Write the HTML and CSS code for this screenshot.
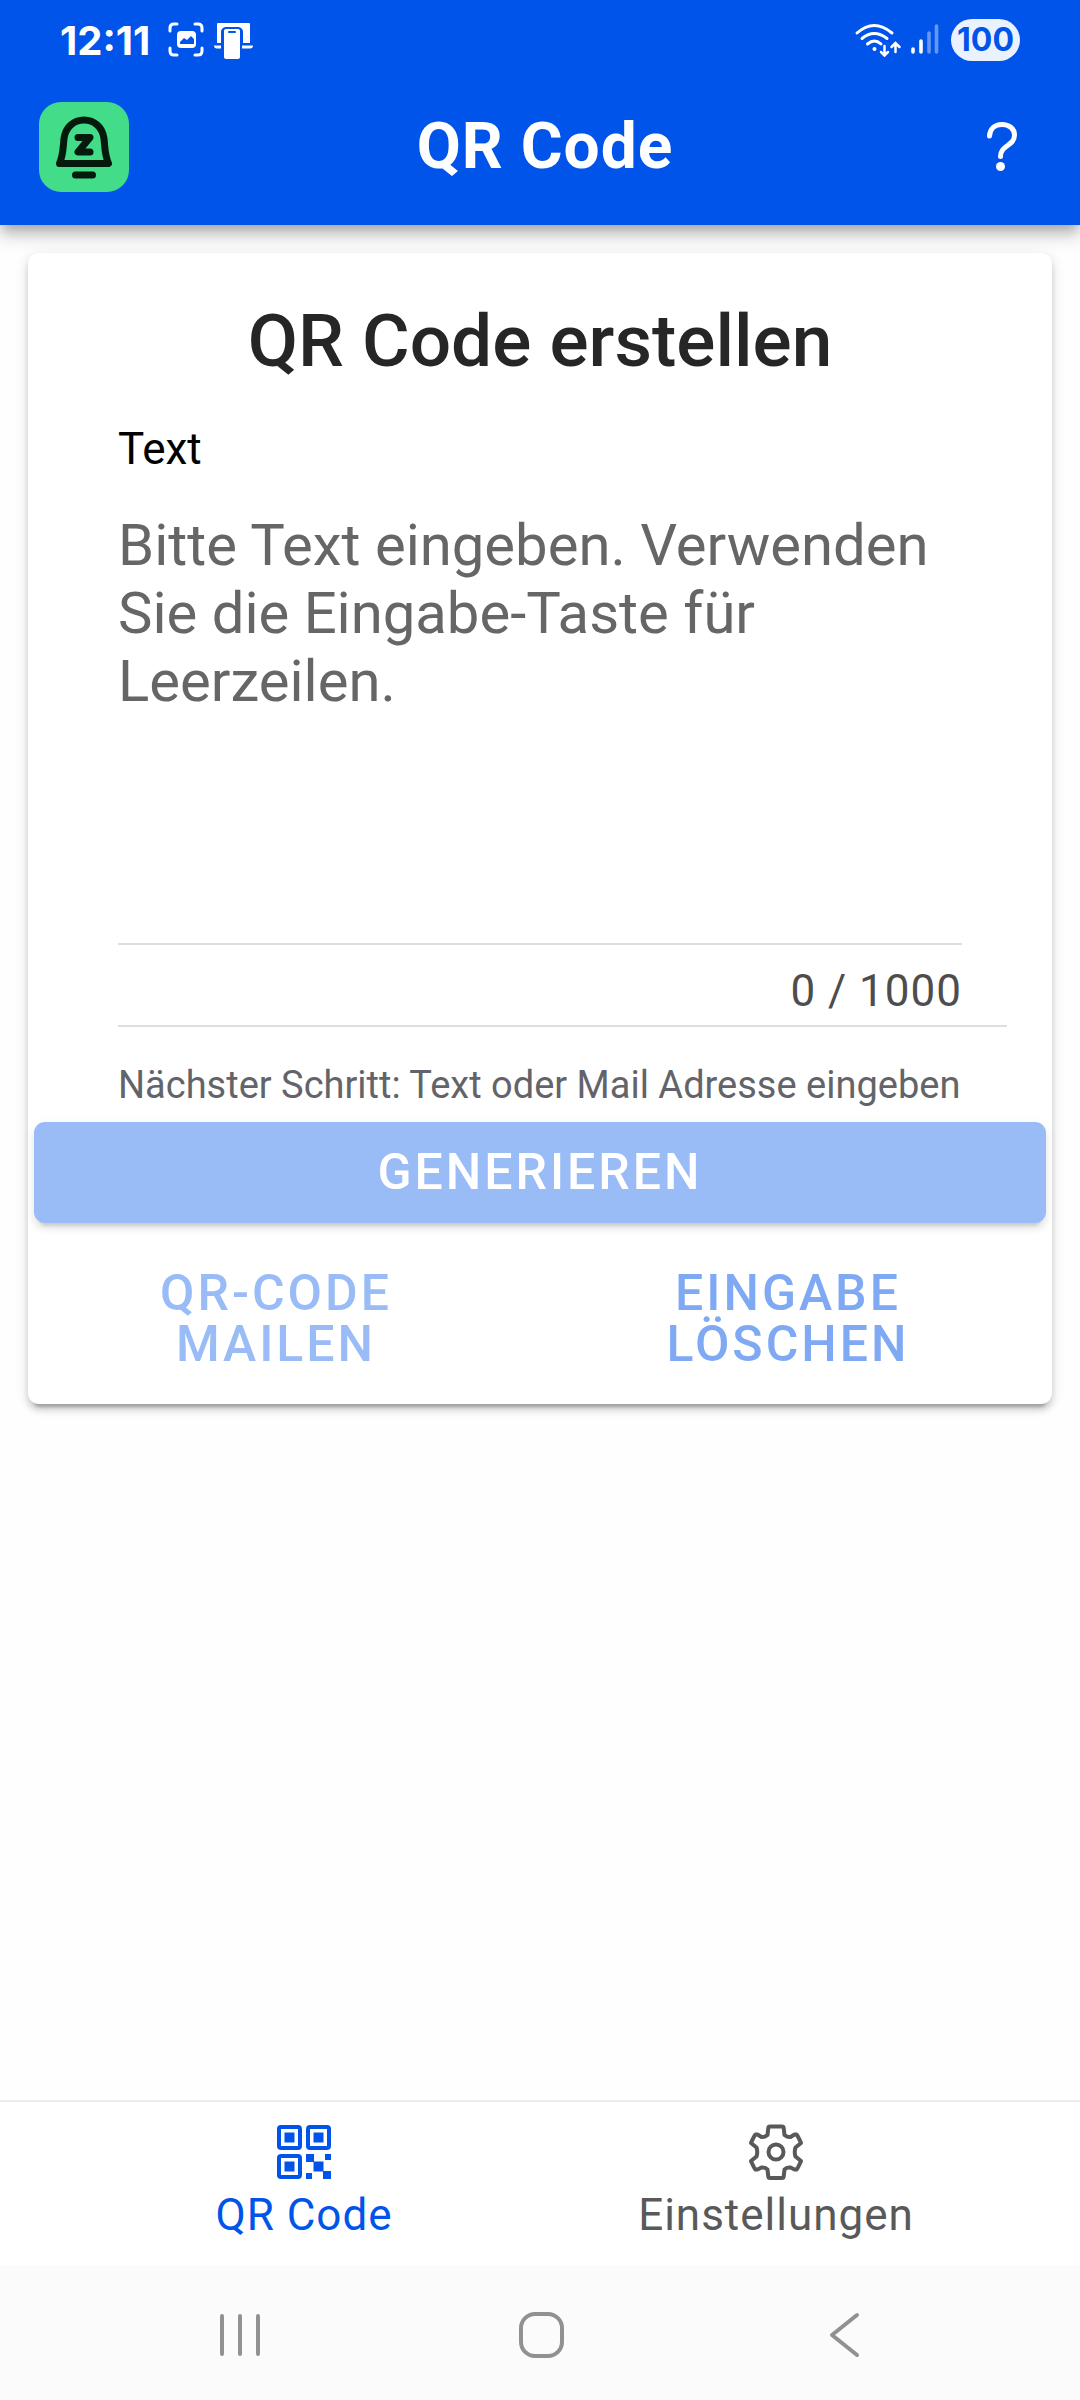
FILE: index.html
```html
<!DOCTYPE html>
<html lang="de">
<head>
<meta charset="utf-8">
<meta name="viewport" content="width=device-width, initial-scale=1">
<title>QR Code</title>
<link rel="stylesheet" href="styles.css">
</head>
<body>
<div class="app">
  <header class="header">
    <div class="status">
      <div class="status-group">
        <span class="clock">12:11</span>
        <svg class="status-icon" width="36" height="36" viewBox="0 0 36 36" aria-hidden="true">
          <path d="M2 9V6q0-4 4-4h3M27 2h3q4 0 4 4v3M34 26v3q0 4-4 4h-3M9 33H6q-4 0-4-4v-3" fill="none" stroke="#fff" stroke-width="3" stroke-linecap="round"/>
          <rect x="9" y="9" width="19" height="17" rx="4" fill="#fff"/>
          <path d="M12 22v-2l4-4 3 2 4-4 3 3v5z" fill="#0054e9"/>
        </svg>
        <svg width="40" height="38" viewBox="0 0 40 38" aria-hidden="true">
          <path d="M3 22V3q0-1 1-1h31q1 0 1 1v19h-7V11q0-4-4-4H11q-4 0-4 4v11z" fill="#fff"/>
          <path d="M0 24.500h7v3H3q-3 0-3-3zM39 24.500H28v3h8q3 0 3-3z" fill="#fff"/>
          <rect x="8" y="6" width="20" height="32" rx="4" fill="#0054e9"/>
          <rect x="10" y="8" width="16" height="30" rx="2" fill="#fff"/>
          <path d="M15 11h6" stroke="#0054e9" stroke-width="2" stroke-linecap="round"/>
        </svg>
      </div>
      <div class="status-group">
        <svg width="46" height="36" viewBox="0 0 46 36" fill="none" stroke="#fff" stroke-width="3" stroke-linecap="round" aria-hidden="true">
          <path d="M2 11q17-15 35 0M7 16.500q12-10 25 0M12.500 22q7-6 13.500 0"/>
          <circle cx="19.500" cy="27" r="2" fill="#fff" stroke="none"/>
          <path d="M29.500 24v9M26 30l3.500 3.500 3.500-3.500M40.500 30v-8.500M36.500 25l4-4 4 4" stroke-width="2.500"/>
        </svg>
        <svg width="28" height="32" viewBox="0 0 28 32" fill="none" stroke="#fff" stroke-width="3.600" stroke-linecap="round" aria-hidden="true">
          <path d="M2 28v-3M10 28V17"/><path d="M18 28V9M25.500 28V2" opacity=".4"/>
        </svg>
        <span class="battery">100</span>
      </div>
    </div>
    <div class="toolbar">
      <button class="logo" type="button" aria-label="Erinnerungen">
        <svg width="90" height="90" viewBox="0 0 90 90" fill="none" stroke="#041a0c" stroke-width="7" stroke-linecap="round" stroke-linejoin="round" aria-hidden="true">
          <path d="M20.500 61.500c4-9 3.500-16 4.500-25 1.500-11 9.500-18.500 20-18.500s18.500 7.500 20 18.500c1 9 .5 16 4.500 25z"/>
          <path d="M39 35.500h12L39 50h12M36.500 73h17"/>
        </svg>
      </button>
      <h1 class="title">QR Code</h1>
      <button class="help" type="button" aria-label="Hilfe">
        <svg width="32" height="50" viewBox="0 0 32 50" aria-hidden="true">
          <path d="M3.500 14c.5-7 5-11.500 12.500-11.500S28.500 7 28.500 13c0 11-14 10-14 21.500" fill="none" stroke="#fff" stroke-width="5" stroke-linecap="round"/>
          <circle cx="14.500" cy="44.500" r="4.500" fill="#fff"/>
        </svg>
      </button>
    </div>
  </header>

  <main class="content">
    <form class="card">
      <h2 class="card-title">QR Code erstellen</h2>
      <div class="field">
        <label class="field-label" for="qr-text">Text</label>
        <textarea class="field-input" id="qr-text" maxlength="1000" placeholder="Bitte Text eingeben. Verwenden Sie die Eingabe-Taste für Leerzeilen."></textarea>
        <div class="counter">0 / 1000</div>
      </div>
      <p class="hint">Nächster Schritt: Text oder Mail Adresse eingeben</p>
      <button class="btn btn-solid" type="button" disabled>Generieren</button>
      <div class="actions">
        <button class="btn btn-clear" type="button" disabled>QR-Code<br>mailen</button>
        <button class="btn btn-clear btn-soft" type="button">Eingabe<br>löschen</button>
      </div>
    </form>
  </main>

  <nav class="tabs">
    <a class="tab tab-active" href="#qr" aria-current="page">
      <svg width="54" height="54" viewBox="0 0 54 54" aria-hidden="true">
        <g fill="none" stroke="currentColor" stroke-width="4"><rect x="2" y="2" width="21" height="21" rx="2"/><rect x="31" y="2" width="21" height="21" rx="2"/><rect x="2" y="31" width="21" height="21" rx="2"/></g>
        <path d="M7.500 7.500h10v10h-10zM36.500 7.500h10v10h-10zM7.500 36.500h10v10h-10zM29 29h8v8h-8zM36.500 36.500h10v10h-10zM48 29h6v6h-6zM29 48h6v6h-6zM46 46h8v8h-8z" fill="currentColor"/>
      </svg>
      <span>QR Code</span>
    </a>
    <a class="tab" href="#einstellungen">
      <svg width="54" height="54" viewBox="0 1 54 54" fill="none" stroke="currentColor" stroke-width="4" stroke-linejoin="round" aria-hidden="true">
        <path d="M21 2.500h12q1.500 0 1.700 1.500l.8 7q3 2.500 6 2l4-2.500 2 0q1.500 1.500 4.500 8.500l-5.500 4.500q-1.500 4.500 0 9l5.500 4.500q-3 7-4.500 8.500l-2 0-4-2q-4-.5-6 2l-.8 7q-.2 1.500-1.700 1.500H21q-1.500 0-1.700-1.500l-.8-7q-2-2.500-6-2l-4 2-2 0q-1.500-1.500-4.500-8.500l5.500-4.500q1.500-4.500 0-9L2 19q3-7 4.500-8.500l2 0 4 2.500q3 .5 6-2l.8-7q.2-1.500 1.700-1.500z"/>
        <circle cx="27" cy="28" r="7.500"/>
      </svg>
      <span>Einstellungen</span>
    </a>
  </nav>

  <div class="sysnav">
    <button class="sysnav-btn" type="button" aria-label="Letzte Apps">
      <svg width="48" height="48" viewBox="0 0 48 48"><path d="M10 5v38M28 5v38M46 5v38"/></svg>
    </button>
    <button class="sysnav-btn" type="button" aria-label="Startseite">
      <svg width="48" height="48" viewBox="0 0 48 48"><rect x="5" y="3" width="41" height="42" rx="14"/></svg>
    </button>
    <button class="sysnav-btn" type="button" aria-label="Zurück">
      <svg width="48" height="48" viewBox="0 0 48 48"><path d="M37 4L12 24l25 20"/></svg>
    </button>
  </div>
</div>
</body>
</html>
```
FILE: styles.css
```css
* { box-sizing: border-box; margin: 0; }

body {
  font-family: Roboto, "Liberation Sans", sans-serif;
  background: #fefefe;
  color: #000;
}

button {
  padding: 0;
  border: 0;
  background: none;
  font: inherit;
  color: inherit;
}

svg { display: block; flex: none; overflow: visible; }

.app {
  display: flex;
  flex-direction: column;
  min-height: 100vh;
}

/* header */
.header {
  background: #0054e9;
  color: #fff;
  box-shadow: 0 6px 11px -3px rgba(0, 0, 0, .2), 0 11px 14px 0 rgba(0, 0, 0, .14), 0 3px 28px 0 rgba(0, 0, 0, .12);
}

.status {
  display: flex;
  justify-content: space-between;
  align-items: center;
  height: 80px;
  padding: 0 60px;
}

.status-group {
  display: flex;
  align-items: center;
  gap: 10px;
}

.clock {
  margin-right: 8px;
  font-family: Inter, Roboto, sans-serif;
  font-size: 40px;
  font-weight: 700;
}

.battery {
  margin-left: 2px;
  padding: 0 6px;
  border-radius: 21px;
  background: #ebf2ff;
  color: #0054e9;
  font-family: Inter, Roboto, sans-serif;
  font-size: 32px;
  font-weight: 700;
  line-height: 42px;
}

.toolbar {
  display: grid;
  grid-template-columns: 90px 1fr 80px;
  align-items: center;
  height: 145px;
  padding: 0 39px 12px;
}

.logo {
  width: 90px;
  height: 90px;
  border-radius: 22px;
  background: #43dc88;
}

.title {
  font-size: 64px;
  font-weight: 700;
  line-height: 80px;
  letter-spacing: 1px;
  text-align: center;
}

.help {
  justify-self: end;
  padding-right: 23px;
}

/* card */
.content { flex: 1; padding: 28px; }

.card {
  padding: 48px 6px 13px;
  border-radius: 11px;
  background: #fff;
  box-shadow: 0 9px 3px -6px rgba(0, 0, 0, .2), 0 6px 6px 0 rgba(0, 0, 0, .14), 0 3px 14px 0 rgba(0, 0, 0, .12);
}

.card-title {
  color: #262626;
  font-size: 73px;
  font-weight: 500;
  line-height: 80px;
  text-align: center;
}

.field {
  display: flex;
  flex-direction: column;
  margin: 40px 39px 0 84px;
  border-bottom: 2px solid #dedede;
}

.field-label {
  font-size: 44px;
  line-height: 56px;
}

.field-input {
  height: 468px;
  margin-right: 45px;
  padding: 34px 0 0;
  border: 0;
  border-bottom: 2px solid #dedede;
  outline: 0;
  background: none;
  font: inherit;
  font-size: 58px;
  line-height: 68px;
  resize: none;
}

.field-input::placeholder { color: #666; opacity: 1; }

.counter {
  margin-right: 45px;
  padding: 18px 0 6px;
  color: #4d4d4d;
  font-size: 44px;
  line-height: 56px;
  letter-spacing: 1px;
  text-align: right;
}

.hint {
  margin-left: 84px;
  padding: 34px 0 13px;
  color: #636469;
  font-size: 38px;
  line-height: 48px;
}

.btn {
  font-size: 50px;
  font-weight: 500;
  line-height: 51px;
  letter-spacing: 3px;
  text-transform: uppercase;
}

.btn-solid {
  width: 100%;
  height: 101px;
  border-radius: 11px;
  background: #99bbf6;
  color: #fff;
  box-shadow: 0 9px 3px -6px rgba(0, 0, 0, .1), 0 6px 6px 0 rgba(0, 0, 0, .07), 0 3px 14px 0 rgba(0, 0, 0, .06);
}

.actions {
  display: grid;
  grid-template-columns: 1fr 1fr;
  margin: 24px -6px 0;
}

.btn-clear {
  height: 144px;
  padding-right: 16px;
  color: #99bbf6;
}

.btn-soft { color: #80a9f4; }

/* bottom navigation */
.tabs {
  display: flex;
  justify-content: center;
  height: 165px;
  border-top: 2px solid #ececec;
  background: #fff;
}

.tab {
  display: flex;
  flex: 1;
  flex-direction: column;
  align-items: center;
  gap: 8px;
  max-width: 472px;
  padding-top: 23px;
  color: #595959;
  font-size: 44px;
  line-height: 56px;
  letter-spacing: 1px;
  text-decoration: none;
}

.tab-active { color: #0054e9; }

.sysnav {
  display: flex;
  justify-content: center;
  gap: 56px;
  height: 135px;
  padding-top: 4px;
  background: #fbfbfb;
}

.sysnav-btn {
  display: grid;
  flex: 0 1 248px;
  place-items: center;
}

.sysnav svg {
  fill: none;
  stroke: #919191;
  stroke-width: 4;
  stroke-linecap: round;
  stroke-linejoin: round;
}
```
